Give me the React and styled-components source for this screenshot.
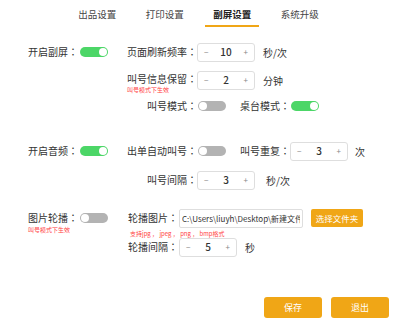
import React from "react"
import styled, { createGlobalStyle } from "styled-components"

const GlobalStyle = createGlobalStyle`
  html, body {
    margin: 0;
    padding: 0;
    background: #fff;
  }
  body {
    font-family: "Noto Sans CJK SC", "Noto Sans", sans-serif;
    color: #333;
  }
`

const Page = styled.div`
  width: 395px;
  height: 336px;
  overflow: hidden;
  position: relative;
`

const Tabs = styled.div`
  display: flex;
  justify-content: center;
  gap: 13.5px;
  padding-left: 2px;
`

const Tab = styled.div`
  width: 54px;
  text-align: center;
  font-size: 9.5px;
  line-height: 10px;
  padding-top: 9px;
  padding-bottom: 6px;
  border-bottom: 2px solid ${({ $active }) => ($active ? "#f0a616" : "transparent")};
  color: ${({ $active }) => ($active ? "#222" : "#444")};
  font-weight: ${({ $active }) => ($active ? 700 : 400)};
`

const Row = styled.div`
  display: flex;
  align-items: flex-start;
  margin-top: ${({ $mt }) => $mt || 0}px;
`

const Cell = styled.div`
  display: flex;
  align-items: center;
  height: ${({ $h }) => $h || 20}px;
  width: ${({ $w }) => ($w ? `${$w}px` : "auto")};
  flex-shrink: 0;
`

const Stack = styled.div`
  display: flex;
  flex-direction: column;
  width: ${({ $w }) => ($w ? `${$w}px` : "auto")};
  padding-top: ${({ $pt }) => $pt || 0}px;
  flex-shrink: 0;
`

const Label = styled.span`
  display: inline-block;
  font-size: 10px;
  line-height: ${({ $compact }) => ($compact ? 10 : 20)}px;
  white-space: nowrap;
  width: ${({ $w }) => ($w ? `${$w}px` : "auto")};
  text-align: ${({ $right }) => ($right ? "right" : "left")};
  margin-left: ${({ $ml }) => $ml || 0}px;
  flex-shrink: 0;
`

const Colon = styled.span`
  font-family: "Noto Sans CJK TC", "Noto Sans", sans-serif;
`

const Hint = styled.div`
  font-size: 6px;
  line-height: 7px;
  color: #ff3d3d;
  white-space: pre;
  margin-left: ${({ $ml }) => $ml || 0}px;
  margin-top: ${({ $mt }) => $mt || 0}px;
`

const Toggle = styled.div`
  position: relative;
  width: 28px;
  height: 10px;
  border-radius: 5px;
  margin-left: ${({ $ml }) => $ml || 0}px;
  background: ${({ $on }) => ($on ? "#4cd667" : "#b3b3b3")};
  flex-shrink: 0;

  &::after {
    content: "";
    position: absolute;
    top: 1px;
    left: ${({ $on }) => ($on ? "19px" : "1px")};
    width: 8px;
    height: 8px;
    border-radius: 50%;
    background: #fff;
  }
`

const StepBox = styled.div`
  display: flex;
  align-items: center;
  justify-content: space-between;
  box-sizing: border-box;
  width: 58px;
  height: 19px;
  padding: 0 6px;
  border: 1px solid #dedede;
  border-radius: 3px;
  background: #fff;
  flex-shrink: 0;
`

const StepSign = styled.span`
  font-size: 8px;
  color: #888;
  line-height: 1;
`

const StepValue = styled.span`
  font-size: 10px;
  color: #333;
  font-weight: 500;
  line-height: 1;
`

const Unit = styled.span`
  font-size: 10px;
  margin-left: ${({ $ml }) => $ml || 8}px;
  white-space: nowrap;
`

const PathInput = styled.input`
  box-sizing: border-box;
  width: 124px;
  height: 19px;
  padding: 0 2px;
  border: 1px solid #dedede;
  border-radius: 2px;
  font-family: "Noto Sans CJK SC", "Noto Sans", sans-serif;
  font-size: 8px;
  color: #333;
  outline: none;
  flex-shrink: 0;
`

const PickButton = styled.button`
  height: 18px;
  width: 52px;
  margin-left: 8px;
  padding: 0;
  border: none;
  border-radius: 2px;
  background: #f0a616;
  color: #fff;
  font-family: "Noto Sans CJK SC", "Noto Sans", sans-serif;
  font-size: 8.5px;
  flex-shrink: 0;
`

const Footer = styled.div`
  display: flex;
  justify-content: flex-end;
  gap: 9px;
  padding-right: 6px;
  margin-top: 40px;
`

const ActionButton = styled.button`
  width: 58px;
  height: 21px;
  padding: 0;
  border: none;
  border-radius: 3px;
  background: #f0a616;
  color: #fff;
  font-family: "Noto Sans CJK SC", "Noto Sans", sans-serif;
  font-size: 9px;
`

const Stepper = ({ value }) => (
  <StepBox>
    <StepSign>−</StepSign>
    <StepValue>{value}</StepValue>
    <StepSign>+</StepSign>
  </StepBox>
)

const FieldLabel = ({ text, ...rest }) => (
  <Label {...rest}>
    {text}
    <Colon>：</Colon>
  </Label>
)

const App = () => {
  return (
    <Page>
      <GlobalStyle />
      <Tabs>
        <Tab>出品设置</Tab>
        <Tab>打印设置</Tab>
        <Tab $active>副屏设置</Tab>
        <Tab>系统升级</Tab>
      </Tabs>

      <Row $mt={15}>
        <Cell $w={127}>
          <FieldLabel $ml={28} $w={50} text="开启副屏" />
          <Toggle $on $ml={2} />
        </Cell>
        <Cell>
          <FieldLabel $w={70} $right text="页面刷新频率" />
          <Stepper value="10" />
          <Unit $ml={8}>秒/次</Unit>
        </Cell>
      </Row>

      <Row $mt={8}>
        <Cell $w={127} />
        <Stack $w={70} $pt={4}>
          <FieldLabel $w={70} $right $compact text="叫号信息保留" />
          <Hint $mt={2}>叫号模式下生效</Hint>
        </Stack>
        <Cell>
          <Stepper value="2" />
          <Unit $ml={8}>分钟</Unit>
        </Cell>
      </Row>

      <Row $mt={3}>
        <Cell $w={127} />
        <Cell $w={113}>
          <FieldLabel $w={70} $right text="叫号模式" />
          <Toggle $ml={1} />
        </Cell>
        <Cell>
          <FieldLabel $w={50} text="桌台模式" />
          <Toggle $on $ml={1} />
        </Cell>
      </Row>

      <Row $mt={25}>
        <Cell $w={127}>
          <FieldLabel $ml={28} $w={50} text="开启音频" />
          <Toggle $on $ml={2} />
        </Cell>
        <Cell $w={113}>
          <FieldLabel $w={70} $right text="出单自动叫号" />
          <Toggle $ml={1} />
        </Cell>
        <Cell>
          <FieldLabel $w={50} text="叫号重复" />
          <Stepper value="3" />
          <Unit $ml={7}>次</Unit>
        </Cell>
      </Row>

      <Row $mt={9}>
        <Cell $w={127} />
        <Cell>
          <FieldLabel $w={70} $right text="叫号间隔" />
          <Stepper value="3" />
          <Unit $ml={11}>秒/次</Unit>
        </Cell>
      </Row>

      <Row $mt={18}>
        <Stack $w={128} $pt={5}>
          <Cell $h={10}>
            <FieldLabel $ml={28} $w={50} $compact text="图片轮播" />
            <Toggle $ml={2} />
          </Cell>
          <Hint $ml={28} $mt={3}>叫号模式下生效</Hint>
        </Stack>
        <Stack>
          <Cell>
            <FieldLabel $w={51} text="轮播图片" />
            <PathInput readOnly value="C:\Users\liuyh\Desktop\新建文件夹" />
            <PickButton>选择文件夹</PickButton>
          </Cell>
          <Hint $ml={2} $mt={2}>{"支持jpg ， jpeg ， png ， bmp格式"}</Hint>
          <Cell>
            <FieldLabel $w={51} text="轮播间隔" />
            <Stepper value="5" />
            <Unit $ml={8}>秒</Unit>
          </Cell>
        </Stack>
      </Row>

      <Footer>
        <ActionButton>保存</ActionButton>
        <ActionButton>退出</ActionButton>
      </Footer>
    </Page>
  )
}

export default App
